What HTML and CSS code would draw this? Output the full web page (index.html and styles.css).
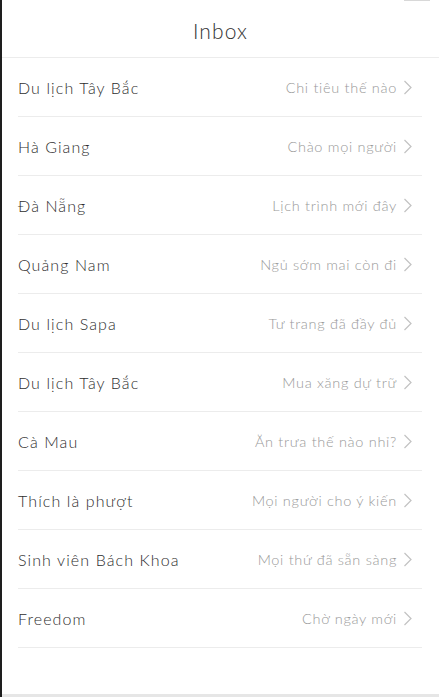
FILE: index.html
```html
<!DOCTYPE html>
<html lang="vi">
<head>
<meta charset="utf-8">
<link rel="stylesheet" href="styles.css">
</head>
<body>
<div class="screen">
  <div class="topmark"></div>
  <header class="header">Inbox</header>
  <ul class="list">
    <li class="row"><span class="name">Du lịch Tây Bắc</span><span class="msg">Chi tiêu thế nào</span><svg class="chev" viewBox="0 0 10 16"><path d="M1.5 1.5 L8 8 L1.5 14.5"/></svg></li>
    <li class="row"><span class="name">Hà Giang</span><span class="msg">Chào mọi người</span><svg class="chev" viewBox="0 0 10 16"><path d="M1.5 1.5 L8 8 L1.5 14.5"/></svg></li>
    <li class="row"><span class="name">Đà Nẵng</span><span class="msg">Lịch trình mới đây</span><svg class="chev" viewBox="0 0 10 16"><path d="M1.5 1.5 L8 8 L1.5 14.5"/></svg></li>
    <li class="row"><span class="name">Quảng Nam</span><span class="msg">Ngủ sớm mai còn đi</span><svg class="chev" viewBox="0 0 10 16"><path d="M1.5 1.5 L8 8 L1.5 14.5"/></svg></li>
    <li class="row"><span class="name">Du lịch Sapa</span><span class="msg">Tư trang đã đầy đủ</span><svg class="chev" viewBox="0 0 10 16"><path d="M1.5 1.5 L8 8 L1.5 14.5"/></svg></li>
    <li class="row"><span class="name">Du lịch Tây Bắc</span><span class="msg">Mua xăng dự trữ</span><svg class="chev" viewBox="0 0 10 16"><path d="M1.5 1.5 L8 8 L1.5 14.5"/></svg></li>
    <li class="row"><span class="name">Cà Mau</span><span class="msg">Ăn trưa thế nào nhỉ?</span><svg class="chev" viewBox="0 0 10 16"><path d="M1.5 1.5 L8 8 L1.5 14.5"/></svg></li>
    <li class="row"><span class="name">Thích là phượt</span><span class="msg">Mọi người cho ý kiến</span><svg class="chev" viewBox="0 0 10 16"><path d="M1.5 1.5 L8 8 L1.5 14.5"/></svg></li>
    <li class="row"><span class="name">Sinh viên Bách Khoa</span><span class="msg">Mọi thứ đã sẵn sàng</span><svg class="chev" viewBox="0 0 10 16"><path d="M1.5 1.5 L8 8 L1.5 14.5"/></svg></li>
    <li class="row"><span class="name">Freedom</span><span class="msg">Chờ ngày mới</span><svg class="chev" viewBox="0 0 10 16"><path d="M1.5 1.5 L8 8 L1.5 14.5"/></svg></li>
  </ul>
  <div class="spacer"></div>
  <div class="bottombar"></div>
</div>
</body>
</html>
```
FILE: styles.css
```css
html, body {
  margin: 0;
  padding: 0;
  background: #fff;
}
body {
  font-family: "Lato", "DejaVu Sans", sans-serif;
  font-weight: 300;
  color: #333;
}
.screen {
  position: relative;
  width: 439px;
  height: 697px;
  box-sizing: border-box;
  border-left: 2px solid #1e1e1e;
  display: flex;
  flex-direction: column;
  overflow: hidden;
}
.topmark {
  position: absolute;
  top: 0;
  left: 402px;
  width: 26px;
  height: 1px;
  background: #d8d8d8;
}
.header {
  height: 58px;
  border-bottom: 1px solid #ececec;
  display: flex;
  align-items: center;
  justify-content: center;
  font-size: 21px;
  letter-spacing: 1.1px;
  color: #333;
  padding-top: 3px;
  box-sizing: border-box;
}
.list {
  list-style: none;
  margin: 0 0 0 16px;
  padding: 0;
  width: 404px;
}
.row {
  height: 59px;
  box-sizing: border-box;
  border-bottom: 1px solid #ececec;
  display: flex;
  align-items: center;
  padding-top: 1px;
}
.name {
  flex: 1;
  font-size: 16px;
  letter-spacing: 1.1px;
  color: #2e2e2e;
}
.msg {
  font-size: 14.5px;
  letter-spacing: 0.7px;
  color: #999;
  margin-right: 6px;
}
.chev {
  width: 10px;
  height: 17px;
  margin-right: 9px;
}
.chev path {
  fill: none;
  stroke: #c2c2c2;
  stroke-width: 1.2;
}
.spacer {
  flex: 1;
}
.bottombar {
  height: 3px;
  background: #e6e6e6;
}
```
